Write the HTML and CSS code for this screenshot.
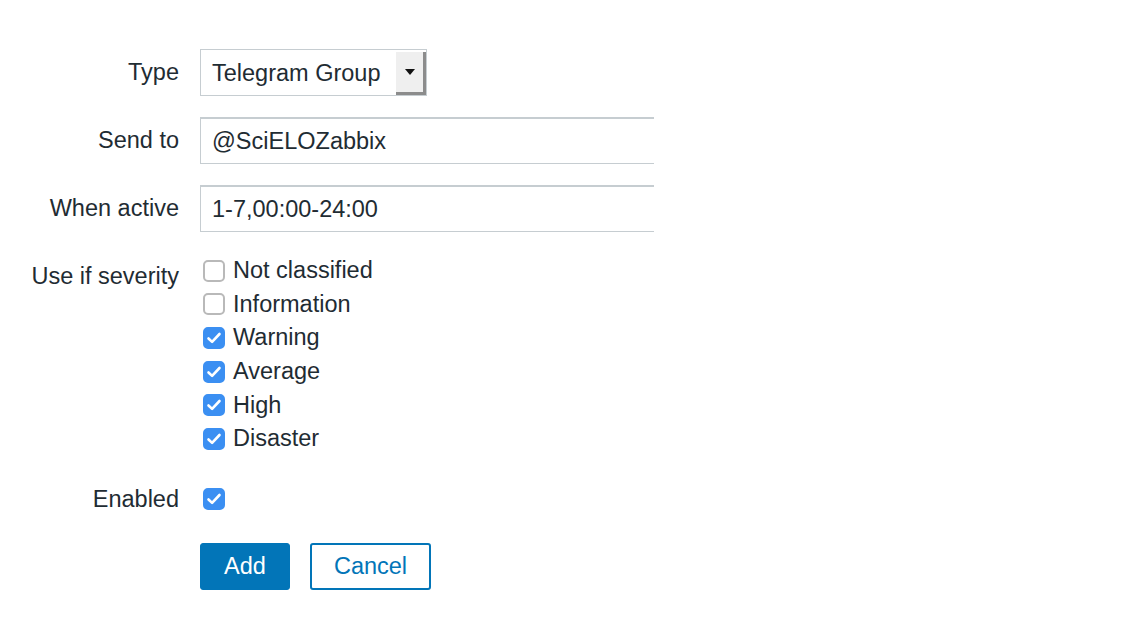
FILE: index.html
```html
<!DOCTYPE html>
<html>
<head>
<meta charset="utf-8">
<link rel="stylesheet" href="styles.css">
</head>
<body>
<div class="form">
  <div class="label mid">Type</div>
  <div class="field">
    <div class="select">
      <span class="select-text">Telegram Group</span>
      <span class="select-btn"><svg width="12" height="8" viewBox="0 0 12 8"><path d="M1 1h10L6 7z" fill="#111"/></svg></span>
    </div>
  </div>

  <div class="label mid">Send to</div>
  <div class="field"><div class="input">@SciELOZabbix</div></div>

  <div class="label mid">When active</div>
  <div class="field"><div class="input">1-7,00:00-24:00</div></div>

  <div class="label top">Use if severity</div>
  <div class="field list">
    <label class="check"><span class="box"></span>Not classified</label>
    <label class="check"><span class="box"></span>Information</label>
    <label class="check"><span class="box on"><svg width="16" height="14" viewBox="0 0 16 14"><path d="M2.5 7.5l3.6 3.4L13.5 3" fill="none" stroke="#fff" stroke-width="2.6" stroke-linecap="round" stroke-linejoin="round"/></svg></span>Warning</label>
    <label class="check"><span class="box on"><svg width="16" height="14" viewBox="0 0 16 14"><path d="M2.5 7.5l3.6 3.4L13.5 3" fill="none" stroke="#fff" stroke-width="2.6" stroke-linecap="round" stroke-linejoin="round"/></svg></span>Average</label>
    <label class="check"><span class="box on"><svg width="16" height="14" viewBox="0 0 16 14"><path d="M2.5 7.5l3.6 3.4L13.5 3" fill="none" stroke="#fff" stroke-width="2.6" stroke-linecap="round" stroke-linejoin="round"/></svg></span>High</label>
    <label class="check"><span class="box on"><svg width="16" height="14" viewBox="0 0 16 14"><path d="M2.5 7.5l3.6 3.4L13.5 3" fill="none" stroke="#fff" stroke-width="2.6" stroke-linecap="round" stroke-linejoin="round"/></svg></span>Disaster</label>
  </div>

  <div class="label mid enabled-row">Enabled</div>
  <div class="field enabled-row">
    <label class="check"><span class="box on"><svg width="16" height="14" viewBox="0 0 16 14"><path d="M2.5 7.5l3.6 3.4L13.5 3" fill="none" stroke="#fff" stroke-width="2.6" stroke-linecap="round" stroke-linejoin="round"/></svg></span></label>
  </div>

  <div class="label btn-row"></div>
  <div class="field buttons btn-row">
    <button class="btn primary">Add</button>
    <button class="btn secondary">Cancel</button>
  </div>
</div>
</body>
</html>
```

FILE: styles.css
```css
html, body {
  margin: 0;
  padding: 0;
  background: #fff;
}
body {
  font-family: "Liberation Sans", Arial, sans-serif;
  font-size: 23.5px;
  color: #1f2c33;
}
.form {
  width: 654px;
  overflow: hidden;
  display: grid;
  grid-template-columns: 179px 1fr;
  column-gap: 21px;
  row-gap: 21px;
  padding-top: 49px;
}
.label {
  text-align: right;
  white-space: nowrap;
}
.label.mid {
  align-self: center;
}
.label.top {
  padding-top: 7px;
  line-height: 33.6px;
}
.field {
  min-width: 0;
}
.select {
  box-sizing: border-box;
  width: 227px;
  height: 47px;
  border: 1px solid #c6cdd1;
  display: flex;
  align-items: stretch;
  background: #fff;
}
.select-text {
  flex: 1;
  display: flex;
  align-items: center;
  padding-left: 11px;
  padding-top: 1px;
}
.select-btn {
  width: 27px;
  margin: 2px 0 0 0;
  background: #efefef;
  border-right: 3px solid #8c8c8c;
  border-bottom: 3px solid #8c8c8c;
  display: flex;
  align-items: center;
  justify-content: center;
}
.input {
  box-sizing: border-box;
  width: 700px;
  height: 47px;
  border: 1px solid #c6cdd1;
  border-top-width: 2px;
  display: flex;
  align-items: center;
  padding-left: 11px;
}
.list {
  display: flex;
  flex-direction: column;
  padding-top: 1px;
}
.check {
  display: flex;
  align-items: center;
  height: 33.6px;
  gap: 8px;
}
.box {
  box-sizing: border-box;
  width: 22px;
  height: 22px;
  margin-left: 3px;
  border: 2px solid #b9b9b9;
  border-radius: 5px;
  background: #fff;
  display: flex;
  align-items: center;
  justify-content: center;
}
.box.on {
  background: #3b8ff2;
  border-color: #3b8ff2;
}
.enabled-row {
  margin-top: 6px;
}
.buttons {
  display: flex;
  gap: 20px;
}
.btn-row {
  margin-top: 6px;
}
.btn {
  box-sizing: border-box;
  height: 47px;
  font-family: "Liberation Sans", Arial, sans-serif;
  font-size: 23.5px;
  border-radius: 3px;
  padding: 0;
  cursor: pointer;
}
.primary {
  width: 90px;
  background: #0275b8;
  border: 1px solid #0275b8;
  color: #fff;
}
.secondary {
  width: 121px;
  background: #fff;
  border: 2px solid #0275b8;
  color: #0275b8;
}
```
